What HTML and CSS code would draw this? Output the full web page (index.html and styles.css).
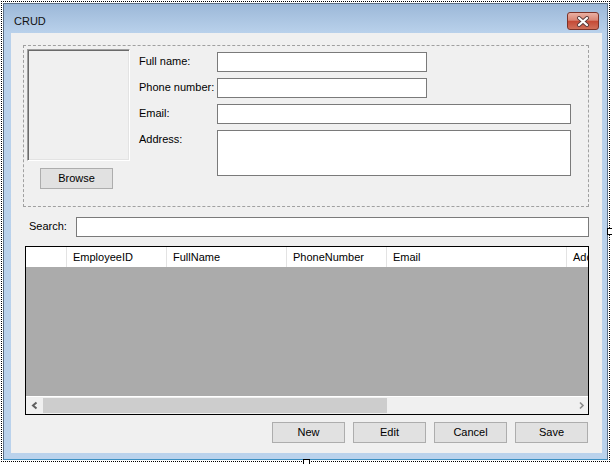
FILE: index.html
```html
<!DOCTYPE html>
<html>
<head>
<meta charset="utf-8">
<title>CRUD</title>
<link rel="stylesheet" href="styles.css">
</head>
<body>
<div class="designer">
  <div class="window">
    <div class="titlebar">
      <span class="title">CRUD</span>
      <div class="close">
        <svg width="14" height="11" viewBox="0 0 14 11">
          <path d="M3 2 L11 9 M11 2 L3 9" stroke="#5a3a3a" stroke-width="4" stroke-linecap="round" fill="none"/>
          <path d="M3 2 L11 9 M11 2 L3 9" stroke="#fff" stroke-width="2.2" stroke-linecap="round" fill="none"/>
        </svg>
      </div>
    </div>
    <div class="frame">
      <div class="client">
        <div class="group">
          <div class="photo-col">
            <div class="photo"></div>
            <div class="btn browse">Browse</div>
          </div>
          <div class="form">
            <span class="lbl">Full name:</span><div class="tb short"></div>
            <span class="lbl">Phone number:</span><div class="tb short"></div>
            <span class="lbl">Email:</span><div class="tb long"></div>
            <span class="lbl">Address:</span><div class="tb long area"></div>
          </div>
        </div>
        <div class="search">
          <span class="lbl search-lbl">Search:</span>
          <div class="tb search-tb"></div>
        </div>
        <div class="grid">
          <div class="grid-head">
            <div class="col c-row"></div>
            <div class="col c-id">EmployeeID</div>
            <div class="col c-name">FullName</div>
            <div class="col c-phone">PhoneNumber</div>
            <div class="col c-email">Email</div>
            <div class="col c-addr">Address</div>
          </div>
          <div class="grid-body"></div>
          <div class="hscroll">
            <div class="arrow">
              <svg width="17" height="17" viewBox="0 0 17 17"><polyline points="10.5,5.5 7,8.5 10.5,11.5" fill="none" stroke="#5f5f5f" stroke-width="2"/></svg>
            </div>
            <div class="thumb"></div>
            <div class="track"></div>
            <div class="arrow">
              <svg width="17" height="17" viewBox="0 0 17 17"><polyline points="9,5.5 12,8.5 9,11.5" fill="none" stroke="#8a8a8a" stroke-width="1.6"/></svg>
            </div>
          </div>
        </div>
        <div class="actions">
          <div class="btn">New</div>
          <div class="btn">Edit</div>
          <div class="btn">Cancel</div>
          <div class="btn">Save</div>
        </div>
      </div>
    </div>
  </div>
  <span class="handle h-right"></span>
  <span class="handle h-bottom"></span>
</div>
</body>
</html>
```

FILE: styles.css
```css
html, body {
  margin: 0;
  padding: 0;
  width: 612px;
  height: 464px;
  overflow: hidden;
  background: #fff;
}
body {
  font-family: "Liberation Sans", Arial, sans-serif;
  font-size: 11px;
  color: #000;
}
.designer {
  position: relative;
  box-sizing: border-box;
  width: 609px;
  height: 461px;
  margin: 1px 0 0 1px;
  padding: 1px;
  border: 1px dotted #000;
}
.window {
  box-sizing: border-box;
  width: 605px;
  height: 457px;
  border: 1px solid #5b6f86;
  border-bottom-color: #3b8fc2;
  background: linear-gradient(#9cb8d8 0, #b9d1eb 29px, #bad2ec 100%);
  display: flex;
  flex-direction: column;
}
.titlebar {
  height: 29px;
  flex: none;
  display: flex;
  justify-content: space-between;
  align-items: flex-start;
}
.title {
  margin: 11px 0 0 10px;
  line-height: 13px;
  font-size: 11px;
  color: #111;
}
.close {
  margin: 8px 8px 0 0;
  width: 32px;
  height: 18px;
  box-sizing: border-box;
  border: 1px solid #7b3329;
  border-radius: 3px;
  background: linear-gradient(#eab0a3, #da8675 45%, #c54a36 52%, #d0705a);
  display: flex;
  align-items: center;
  justify-content: center;
}
.frame {
  padding: 0 5px 6px 7px;
}
.client {
  width: 591px;
  height: 420px;
  box-sizing: border-box;
  background: #f0f0f0;
  padding: 12px 0 0 12px;
  display: flex;
  flex-direction: column;
  align-items: flex-start;
}
.group {
  box-sizing: border-box;
  width: 566px;
  height: 162px;
  border: 1px dashed #a0a0a0;
  padding: 3px;
  display: flex;
  align-items: flex-start;
}
.photo-col {
  width: 103px;
  flex: none;
  display: flex;
  flex-direction: column;
  align-items: flex-start;
}
.photo {
  box-sizing: border-box;
  width: 103px;
  height: 112px;
  border: 1px solid;
  border-color: #a0a0a0 #fff #fff #a0a0a0;
  box-shadow: inset 1px 1px #6a6a6a, inset -1px -1px #e3e3e3;
  background: #f0f0f0;
}
.btn {
  box-sizing: border-box;
  width: 73px;
  height: 21px;
  border: 1px solid #adadad;
  background: #e1e1e1;
  display: flex;
  align-items: center;
  justify-content: center;
  line-height: 13px;
}
.browse {
  margin: 7px 0 0 13px;
}
.form {
  margin: 3px 0 0 9px;
  display: grid;
  grid-template-columns: 78px auto;
  row-gap: 6px;
  align-items: start;
  justify-items: start;
}
.lbl {
  padding-top: 3px;
  line-height: 13px;
  white-space: nowrap;
}
.tb {
  box-sizing: border-box;
  height: 20px;
  border: 1px solid #7a7a7a;
  background: #fff;
}
.short { width: 210px; }
.long { width: 354px; }
.area { height: 46px; }
.search {
  margin-top: 10px;
  display: flex;
  align-items: flex-start;
}
.search-lbl {
  margin-left: 6px;
  width: 47px;
}
.search-tb {
  width: 513px;
}
.grid {
  margin: 9px 0 0 2px;
  width: 564px;
  height: 169px;
  box-sizing: border-box;
  border: 1px solid #000;
  display: flex;
  flex-direction: column;
  background: #ababab;
  overflow: hidden;
}
.grid-head {
  display: flex;
  height: 20px;
  flex: none;
  background: #fff;
  white-space: nowrap;
  overflow: hidden;
}
.col {
  flex: none;
  box-sizing: border-box;
  border-right: 1px solid #e3e3e3;
  line-height: 20px;
  padding-left: 6px;
}
.c-row { width: 41px; }
.c-id { width: 100px; }
.c-name { width: 120px; }
.c-phone { width: 100px; }
.c-email { width: 180px; }
.c-addr { width: 100px; }
.grid-body {
  flex: 1;
  background: #ababab;
  border-bottom: 1px solid #fff;
}
.hscroll {
  height: 17px;
  flex: none;
  display: flex;
  background: #f0f0f0;
}
.arrow {
  width: 17px;
  height: 17px;
  flex: none;
}
.arrow svg { display: block; }
.thumb {
  width: 344px;
  flex: none;
  margin: 1px 0;
  background: #cdcdcd;
}
.track { flex: 1; }
.actions {
  margin-top: 7px;
  width: 565px;
  display: flex;
  justify-content: flex-end;
  gap: 8px;
}
.handle {
  position: absolute;
  box-sizing: border-box;
  width: 7px;
  height: 7px;
  border: 1px solid #000;
  background: #fff;
}
.h-right { left: 605px; top: 226px; }
.h-bottom { left: 301px; top: 457px; }
```
